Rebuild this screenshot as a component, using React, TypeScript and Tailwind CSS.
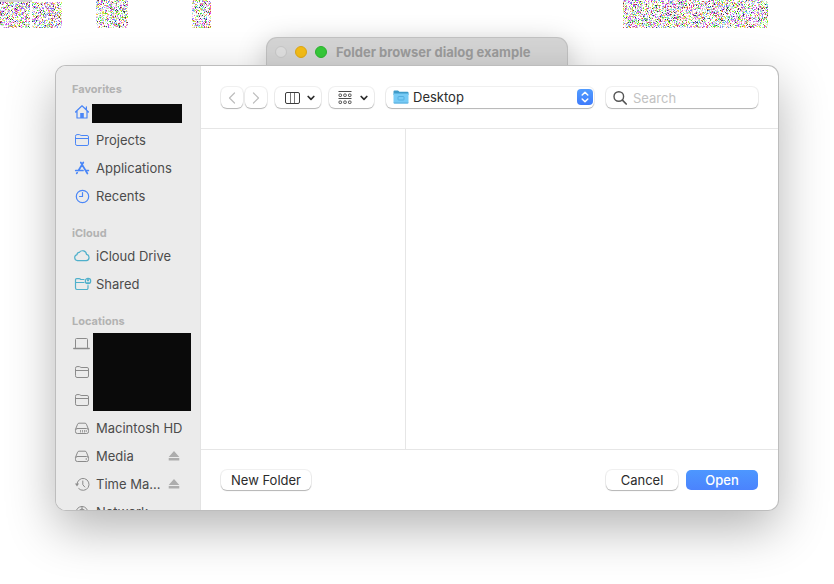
import type { ReactNode } from "react";

const NOISE_COLORS = [
  "#e23be8", "#9a4cf5", "#3fe93a", "#b6f03a", "#f4f03c", "#6fe9ee",
  "#f6b3f0", "#bfeccd", "#a49cf8", "#d04a4a", "#3a3460", "#f5a35a",
  "#d9c9f5", "#fbd9c0", "#6a8bf8", "#c8f5f5", "#f5f5b8", "#f06ad8",
  "#a8f59a", "#e8e0ff",
];

function noisePaths(width: number, height: number, seed: number) {
  const paths = NOISE_COLORS.map(() => "");
  let s = seed;
  const next = () => {
    s = (s + 0x6d2b79f5) | 0;
    let t = Math.imul(s ^ (s >>> 15), 1 | s);
    t = (t + Math.imul(t ^ (t >>> 7), 61 | t)) ^ t;
    return ((t ^ (t >>> 14)) >>> 0) / 4294967296;
  };
  for (let y = 0; y < height; y++) {
    for (let x = 0; x < width; x++) {
      if (next() < 0.6) {
        const i = Math.floor(next() * NOISE_COLORS.length);
        paths[i] += `M${x} ${y}h1v1h-1z`;
      }
    }
  }
  return paths;
}

function Noise({ width, height, seed, className }: { width: number; height: number; seed: number; className?: string }) {
  return (
    <svg width={width} height={height} shapeRendering="crispEdges" className={`block shrink-0 ${className ?? ""}`} aria-hidden="true">
      {noisePaths(width, height, seed).map((d, i) => (
        <path key={NOISE_COLORS[i]} d={d} fill={NOISE_COLORS[i]} />
      ))}
    </svg>
  );
}

function Icon({ children, className }: { children: ReactNode; className?: string }) {
  return (
    <svg
      width="20"
      height="16"
      viewBox="0 0 20 16"
      fill="none"
      stroke="currentColor"
      strokeLinecap="round"
      strokeLinejoin="round"
      className={`shrink-0 ${className ?? ""}`}
      aria-hidden="true"
    >
      {children}
    </svg>
  );
}

const HomeIcon = () => (
  <Icon className="text-[#4a86f7]">
    <path d="M3.5 8 10 1.8 16.5 8M5 7v7h10V7M14.4 5.6V2.8" strokeWidth="1.2" />
    <path d="M8.2 14V9h3.6v5z" fill="currentColor" stroke="none" />
  </Icon>
);

const FolderIcon = ({ className }: { className: string }) => (
  <Icon className={className}>
    <path d="M3.5 4A1.4 1.4 0 0 1 4.9 2.6h2.4c.7 0 1 .9 1.8.9h6A1.4 1.4 0 0 1 16.5 4.9v7.2a1.4 1.4 0 0 1-1.4 1.4H4.9a1.4 1.4 0 0 1-1.4-1.4zM3.5 6.5h13" />
  </Icon>
);

const AppsIcon = () => (
  <Icon className="text-[#4a86f7]">
    <path d="M11.3 2.5 6.5 10.5M8.8 2.5l6.6 11M3.7 10.5h7.3M13.8 10.5h2.6M5.2 12.6l-.5.8" strokeWidth="1.7" />
  </Icon>
);

const ClockIcon = () => (
  <Icon className="text-[#4a86f7]">
    <circle cx="10.5" cy="8.5" r="6.2" strokeWidth="1.2" />
    <path d="M10.5 4.5v4h-3" strokeWidth="1.2" />
  </Icon>
);

const CloudIcon = () => (
  <Icon className="text-[#4fb0cb]">
    <path d="M5.5 12.7a3.1 3.1 0 0 1-.4-6.1 2 2 0 0 1 2.2-2.2 4 4 0 0 1 7.2 2 3.2 3.2 0 0 1-.2 6.3z" strokeWidth="1.2" />
  </Icon>
);

const SharedIcon = () => (
  <Icon className="text-[#4fb0cb]">
    <path d="M12 3.5H9.1c-.8 0-1.1-.9-1.8-.9H4.7a1.2 1.2 0 0 0-1.2 1.2v8.3a1.4 1.4 0 0 0 1.4 1.4h9.7a1.4 1.4 0 0 0 1.4-1.4V9.5M3.5 6.5h8.5" strokeWidth="1.2" />
    <circle cx="16" cy="5" r="2.7" strokeWidth="1.2" />
    <circle cx="16" cy="4.2" r="1.1" fill="currentColor" stroke="none" />
    <path d="M14.2 6.8a2 2 0 0 1 3.6 0z" fill="currentColor" stroke="none" />
  </Icon>
);

const LaptopIcon = () => (
  <Icon className="text-[#8b8b8b]">
    <path d="M3.500 11.500V3.500a1 1 0 0 1 1-1h10a1 1 0 0 1 1 1v8" />
    <path d="M1.800 12.500h15.400" strokeWidth="1.400" />
  </Icon>
);

const DriveIcon = ({ ports }: { ports?: boolean }) => (
  <Icon className="text-[#8b8b8b]">
    <path d="M3.5 9.3 5.6 4.2A1.5 1.5 0 0 1 7 3.2h6a1.5 1.5 0 0 1 1.4 1l2.1 5.1" />
    <rect x="3.5" y="8.500" width="13" height="5" rx="1.8" />
    {ports ? <path d="M8.5 10v2.500M10.500 10v2.500M12.500 10v2.500" strokeLinecap="butt" strokeWidth=".8" /> : null}
    <circle cx="14.300" cy="11" r=".8" fill="currentColor" stroke="none" />
  </Icon>
);

const TimeIcon = () => (
  <Icon className="text-[#8b8b8b]">
    <path d="M5 8.5a6 6 0 1 1 1.700 4.100M10.800 5v3.700l2 2.300" />
    <path d="M3 7.600h4L5 10.400z" fill="currentColor" stroke="none" />
  </Icon>
);

const GlobeIcon = () => (
  <Icon className="text-[#8b8b8b]">
    <circle cx="10" cy="8.5" r="6" />
    <path d="M4 8.500h12M10 2.500v12M10 5a3.500 3.500 0 0 1 3.500 3.500M10 5a3.500 3.500 0 0 0-3.500 3.500" />
  </Icon>
);

function Eject({ name }: { name: string }) {
  return (
    <button type="button" aria-label={`Eject ${name}`} className="ml-auto text-[#adadad]">
      <svg width="12" height="12" viewBox="0 0 12 12" fill="currentColor" aria-hidden="true">
        <path d="M6 1 11.300 7H.7zM.7 8h10.600v2.500H.7z" />
      </svg>
    </button>
  );
}

function Row({ icon, children, extra }: { icon: ReactNode; children?: ReactNode; extra?: ReactNode }) {
  return (
    <li className="flex h-7 items-center gap-1">
      {icon}
      {children ? <span className="whitespace-nowrap">{children}</span> : null}
      {extra}
    </li>
  );
}

function Section({ title, children, className }: { title: string; children: ReactNode; className?: string }) {
  return (
    <section className={className}>
      <h2 className="text-[11px] leading-[18px] font-bold text-[#b2b2b2]">{title}</h2>
      <ul>{children}</ul>
    </section>
  );
}

const CONTROL =
  "rounded-[6px] bg-white shadow-[0_0_0_1px_rgba(0,0,0,0.06),0_1px_1px_rgba(0,0,0,0.25)]";

const Chevron = () => (
  <svg width="8" height="6" viewBox="0 0 8 6" fill="none" stroke="#2c2c2c" strokeWidth="1.700" strokeLinecap="round" strokeLinejoin="round" aria-hidden="true">
    <path d="M1.200 1.500 4 4.300l2.800-2.800" />
  </svg>
);

export default function App() {
  return (
    <div className="overflow-hidden bg-white pb-[73px] font-['Inter','Liberation_Sans',sans-serif] text-[13px] leading-4 text-[#4b4b4b]">
      <div className="flex h-7 items-end">
        <div className="w-8 shrink-0">
          <div className="h-[2px] bg-[#d2d2d2]" />
          <Noise width={30} height={26} seed={11} />
        </div>
        <Noise width={30} height={26} seed={29} />
        <Noise width={32} height={28} seed={47} className="ml-[34px]" />
        <Noise width={19} height={28} seed={83} className="ml-16" />
        <Noise width={145} height={28} seed={131} className="mr-[66px] ml-auto" />
      </div>

      <main className="px-14 pt-[10px]">
        <div className="mx-auto flex h-7 w-[300px] items-center gap-2 rounded-t-[10px] bg-[#d5d5d5] pl-2 shadow-[0_0_0_1px_#c2c2c2,0_8px_30px_rgba(0,0,0,0.3)]">
          <button type="button" aria-label="Close" className="size-3 rounded-full border border-[#c9c9c9] bg-[#e0e0e0]" />
          <button type="button" aria-label="Minimize" className="size-3 rounded-full border border-[#dfa815] bg-[#f6be17]" />
          <button type="button" aria-label="Zoom" className="size-3 rounded-full border border-[#2cb42f] bg-[#37cb3a]" />
          <h1 className="pl-px font-bold whitespace-nowrap text-[#9c9c9c]">Folder browser dialog example</h1>
        </div>

        <div
          role="dialog"
          aria-label="Choose a folder"
          className="relative flex rounded-[10px] bg-white shadow-[0_0_0_1px_#bdbdbd,0_18px_50px_rgba(0,0,0,0.3)]"
        >
          <nav aria-label="Sidebar" className="w-[145px] shrink-0 overflow-hidden rounded-l-[10px] border-r border-[#e3e3e3] bg-[#ebebeb] pt-[14px] pr-5 pl-4 contain-size">
            <Section title="Favorites">
              <Row icon={<HomeIcon />} extra={<span className="mt-[3px] -ml-1 h-[19px] w-[90px] shrink-0 bg-[#0a0a0a]" />} />
              <Row icon={<FolderIcon className="text-[#4a86f7]" />}>Projects</Row>
              <Row icon={<AppsIcon />}>Applications</Row>
              <Row icon={<ClockIcon />}>Recents</Row>
            </Section>
            <Section title="iCloud" className="mt-[14px]">
              <Row icon={<CloudIcon />}>iCloud Drive</Row>
              <Row icon={<SharedIcon />}>Shared</Row>
            </Section>
            <Section title="Locations" className="mt-[14px]">
              <li className="relative">
                <ul>
                  <Row icon={<LaptopIcon />} />
                  <Row icon={<FolderIcon className="text-[#8b8b8b]" />} />
                  <Row icon={<FolderIcon className="text-[#8b8b8b]" />} />
                </ul>
                <span className="absolute top-[3px] bottom-[3px] left-[21px] w-[98px] bg-[#0a0a0a]" />
              </li>
              <Row icon={<DriveIcon ports />}>Macintosh HD</Row>
              <Row icon={<DriveIcon />} extra={<Eject name="Media" />}>Media</Row>
              <Row icon={<TimeIcon />} extra={<Eject name="Time Machine" />}>Time Ma...</Row>
              <Row icon={<GlobeIcon />}>Network</Row>
            </Section>
          </nav>

          <div className="min-w-0 flex-1">
            <header className="flex items-center gap-3 border-b border-[#e6e6e6] px-5 pt-[21px] pb-5">
              <div className="flex shrink-0 gap-2">
                <div className="flex gap-[2px]">
                  <button type="button" aria-label="Back" className={`${CONTROL} flex h-[21px] w-[22px] items-center justify-center`}>
                    <svg width="8" height="12" viewBox="0 0 8 12" fill="none" stroke="#bdbdbd" strokeWidth="1.200" strokeLinecap="round" strokeLinejoin="round" aria-hidden="true">
                      <path d="M6.500 1 1.500 6l5 5" />
                    </svg>
                  </button>
                  <button type="button" aria-label="Forward" className={`${CONTROL} flex h-[21px] w-[22px] items-center justify-center`}>
                    <svg width="8" height="12" viewBox="0 0 8 12" fill="none" stroke="#bdbdbd" strokeWidth="1.200" strokeLinecap="round" strokeLinejoin="round" aria-hidden="true">
                      <path d="m1.500 1 5 5-5 5" />
                    </svg>
                  </button>
                </div>
                <button type="button" aria-label="View as columns" className={`${CONTROL} flex h-[21px] w-[46px] items-center justify-between pr-[6px] pl-[10px]`}>
                  <svg width="15" height="12" viewBox="0 0 15 12" fill="none" stroke="#3c3c3c" aria-hidden="true">
                    <rect x=".5" y=".5" width="14" height="11" rx="1.500" />
                    <path d="M5.500 1v10M9.500 1v10" stroke="#777" />
                  </svg>
                  <Chevron />
                </button>
                <button type="button" aria-label="Group items" className={`${CONTROL} flex h-[21px] w-[45px] items-center justify-between pr-[6px] pl-[9px]`}>
                  <svg width="14" height="15" viewBox="0 0 14 15" fill="none" stroke="#4a4a4a" aria-hidden="true">
                    <path d="M.5 1.500h13M.5 8.500h13" />
                    <rect x="1" y="4" width="2.500" height="2.500" rx=".7" />
                    <rect x="5.750" y="4" width="2.500" height="2.500" rx=".7" />
                    <rect x="10.500" y="4" width="2.500" height="2.500" rx=".7" />
                    <rect x="1" y="11" width="2.500" height="2.500" rx=".7" />
                    <rect x="5.750" y="11" width="2.500" height="2.500" rx=".7" />
                    <rect x="10.500" y="11" width="2.500" height="2.500" rx=".7" />
                  </svg>
                  <Chevron />
                </button>
              </div>

              <div className="relative min-w-0 flex-1">
                <select aria-label="Location" className={`${CONTROL} block h-[21px] w-full appearance-none pr-6 pb-px pl-[27px] text-[#2b2b2b]`}>
                  <option>Desktop</option>
                </select>
                <svg width="16" height="14" viewBox="0 0 16 14" className="pointer-events-none absolute top-[3px] left-[7px]" aria-hidden="true">
                  <path d="M.5 1.500A1 1 0 0 1 1.500.500H5l1.500 1.300h8a1 1 0 0 1 1 1V5H.5z" fill="#3f9bc9" />
                  <path d="M.5 3.500h15v9a1 1 0 0 1-1 1h-13a1 1 0 0 1-1-1z" fill="#77cbf6" />
                  <path d="M.5 12.500h15a1 1 0 0 1-1 1h-13a1 1 0 0 1-1-1z" fill="#5aaedb" />
                  <rect x="5" y="6.500" width="6" height="3.500" rx=".7" fill="none" stroke="#55afe0" />
                </svg>
                <span className="pointer-events-none absolute top-[2px] right-px flex size-4 items-center justify-center rounded-[4px] bg-linear-to-b from-[#529cff] to-[#3f7bfb]">
                  <svg width="8" height="12" viewBox="0 0 8 12" fill="none" stroke="#fff" strokeWidth="1.500" strokeLinecap="round" strokeLinejoin="round" aria-hidden="true">
                    <path d="M1.200 4 4 1.300 6.800 4M1.200 8 4 10.700 6.800 8" />
                  </svg>
                </span>
              </div>

              <label className={`${CONTROL} flex h-[21px] w-[152px] shrink-0 items-center gap-[6px] pl-[7px]`}>
                <svg width="14" height="14" viewBox="0 0 14 14" fill="none" stroke="#555" strokeWidth="1.400" strokeLinecap="round" className="shrink-0" aria-hidden="true">
                  <circle cx="5.800" cy="5.500" r="4.800" />
                  <path d="m9.400 9.100 3.800 3.900" strokeWidth="1.700" />
                </svg>
                <input type="search" aria-label="Search" placeholder="Search" className="w-full min-w-0 bg-transparent outline-none placeholder:text-[#c2c2c2]" />
              </label>
            </header>

            <div className="flex h-80">
              <div className="w-[205px] shrink-0 border-r border-[#e6e6e6]" />
              <div className="flex-1" />
            </div>

            <footer className="flex items-center gap-2 border-t border-[#e6e6e6] px-5 py-5 text-[#2b2b2b]">
              <button type="button" className={`${CONTROL} mr-auto h-5 w-[90px] pb-px`}>New Folder</button>
              <button type="button" className={`${CONTROL} h-5 w-[72px] pb-px`}>Cancel</button>
              <button type="button" className="h-5 w-[72px] rounded-[5px] bg-linear-to-b from-[#4d97ff] to-[#4b83fd] pb-px font-medium text-white">
                Open
              </button>
            </footer>
          </div>
        </div>
      </main>
    </div>
  );
}
